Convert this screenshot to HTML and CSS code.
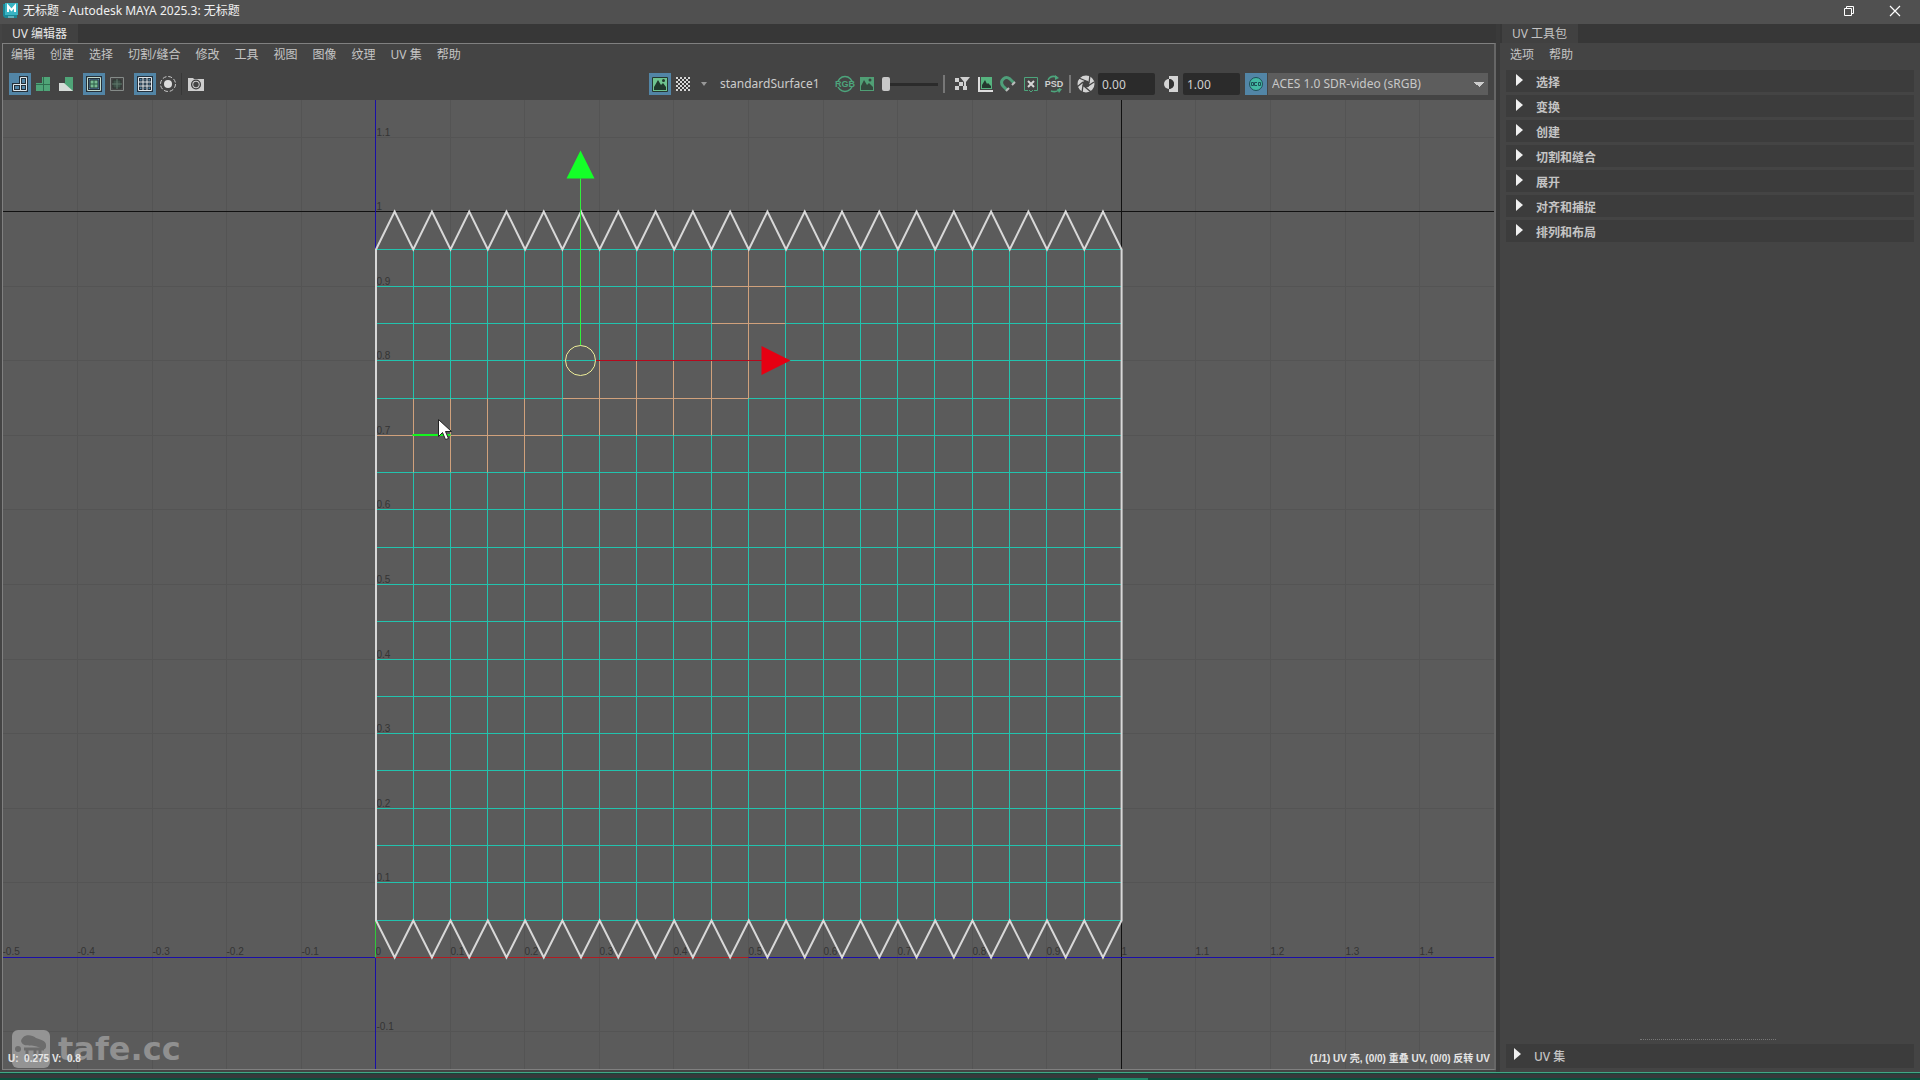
FILE: index.html
```
<!DOCTYPE html>
<html lang="zh-CN">
<head>
    <meta charset="UTF-8">
    <meta name="viewport" content="width=device-width, initial-scale=1.0">
    <title>无标题 - Autodesk MAYA 2025.3: 无标题</title>
    <link rel="stylesheet" href="styles.css">
</head>
<body>
    <header class="titlebar">
        <svg class="app-icon" viewBox="0 0 16 16">
            <path d="M1 1h14v14H3l-2-2z" fill="#1b8796"/>
            <path d="M3 0h13v12H3z" fill="#39b4c4"/>
            <path d="M6 9V3l3.5 4L13 3v6" fill="none" stroke="#fff" stroke-width="2"/>
            <path d="M6 14h6" stroke="#a5d8df"/>
        </svg>
        <h1>无标题 - Autodesk MAYA 2025.3: 无标题</h1>
        <div class="window-controls">
            <button type="button" aria-label="还原">
                <svg viewBox="0 0 10 10" width="10" height="10"><path d="M.5 2.5h7v7h-7zM2.5 2.5v-2h7v7h-2" fill="none" stroke="#fff"/></svg>
            </button>
            <button type="button" aria-label="关闭">
                <svg viewBox="0 0 10 10" width="10" height="10"><path d="M0 0l10 10M10 0L0 10" stroke="#fff" stroke-width="1.2"/></svg>
            </button>
        </div>
    </header>

    <main class="workspace">
        <section class="editor">
            <div class="tabs">
                <button type="button" class="tab active">UV 编辑器</button>
            </div>
            <div class="editor-frame">
                <nav class="menu">
                    <a href="#">编辑</a>
                    <a href="#">创建</a>
                    <a href="#">选择</a>
                    <a href="#">切割/缝合</a>
                    <a href="#">修改</a>
                    <a href="#">工具</a>
                    <a href="#">视图</a>
                    <a href="#">图像</a>
                    <a href="#">纹理</a>
                    <a href="#">UV 集</a>
                    <a href="#">帮助</a>
                </nav>

                <div class="toolbar">
                    <div class="tool-group">
                        <button type="button" class="tool on" aria-label="线框">
                            <svg viewBox="0 0 22 22"><g fill="none" stroke="#263038" stroke-width="3"><path d="M4.5 11.5h7v6h-7zM11.5 11.5h6v6h-6zM11.5 4.5h6v7h-6z"/></g><g fill="none" stroke="#dfe8ec"><path d="M4.5 11.5h7v6h-7zM11.5 11.5h6v6h-6zM11.5 4.5h6v7h-6z"/></g></svg>
                        </button>
                        <button type="button" class="tool" aria-label="着色">
                            <svg viewBox="0 0 22 22"><path d="M4 10h6V4h8v14H4z" fill="#4fa578"/><path d="M4 11.5h14M11.5 4v14" stroke="#2f6f50"/></svg>
                        </button>
                        <button type="button" class="tool" aria-label="扭曲">
                            <svg viewBox="0 0 22 22"><path d="M4 10h6V4h8v14H4z" fill="#4fa578"/><path d="M4 10h5l9 8H4z" fill="#d6dcd8"/></svg>
                        </button>
                    </div>
                    <div class="tool-group">
                        <button type="button" class="tool on" aria-label="边界">
                            <svg viewBox="0 0 22 22"><path d="M4.5 4.5h13v13h-13z" fill="none" stroke="#263038" stroke-width="3"/><path d="M4.5 4.5h13v13h-13z" fill="none" stroke="#c4dccf"/><path d="M7 7h8v8H7z" fill="#78bb92" stroke="#263038"/><path d="M11 7v8M7 11h8" stroke="#2c5c46"/></svg>
                        </button>
                        <button type="button" class="tool" aria-label="接缝">
                            <svg viewBox="0 0 22 22"><path d="M4.5 4.5h13v13h-13z" fill="none" stroke="#858b88"/><path d="M7 7h8v8H7z" fill="#3e5048" stroke="#2c3430"/><path d="M11 6v10M6 11h10" stroke="#607a6c"/></svg>
                        </button>
                    </div>
                    <div class="tool-group">
                        <button type="button" class="tool on" aria-label="栅格">
                            <svg viewBox="0 0 22 22"><g fill="none"><path d="M4.5 4.5h13v13h-13zM9 4v14M13 4v14M4 9h14M4 13h14" stroke="#24313d" stroke-width="3"/><path d="M4.5 4.5h13v13h-13zM9 4v14M13 4v14M4 9h14M4 13h14" stroke="#e1e9ed"/></g></svg>
                        </button>
                        <button type="button" class="tool" aria-label="隔离选择">
                            <svg viewBox="0 0 22 22"><circle cx="11" cy="11" r="4" fill="#ddd"/><circle cx="11" cy="11" r="7.5" fill="none" stroke="#c9c9c9" stroke-dasharray="4 1.9"/></svg>
                        </button>
                    </div>
                    <div class="tool-group divided">
                        <button type="button" class="tool" aria-label="UV 快照">
                            <svg viewBox="0 0 22 22"><path d="M3 5h5l1 1h10v12H3z" fill="#cecece"/><circle cx="11" cy="11.5" r="5" fill="#3c3c3c"/><circle cx="11" cy="11.5" r="3.7" fill="#cecece"/><circle cx="11" cy="11.5" r="2.7" fill="#444"/></svg>
                        </button>
                    </div>

                    <div class="tool-group display">
                        <button type="button" class="tool on" aria-label="显示图像">
                            <svg viewBox="0 0 22 22"><path d="M3.5 4.5h15v14h-15z" fill="#6fc48f" stroke="#25382f"/><path d="M5 17V14l4-7 3 5 2-2 3 4v3z" fill="#20382c"/><circle cx="14.5" cy="7.5" r="1.5" fill="#20382c"/></svg>
                        </button>
                        <button type="button" class="tool" aria-label="棋盘格">
                            <svg viewBox="0 0 22 22"><defs><pattern id="checker" width="4" height="4" patternUnits="userSpaceOnUse"><path d="M0 0h2v2H0zM2 2h2v2H2z" fill="#d4d4d4"/></pattern></defs><path d="M4 4h14v14H4z" fill="#3a3a3a"/><path d="M4 4h14v14H4z" fill="url(#checker)"/></svg>
                        </button>
                        <button type="button" class="tool" aria-label="棋盘格选项">
                            <svg viewBox="0 0 22 22"><path d="M6 9h6l-3 4z" fill="#999"/></svg>
                        </button>
                    </div>
                    <span class="material">standardSurface1</span>
                    <button type="button" class="tool" aria-label="RGB 通道">
                        <svg viewBox="0 0 22 22"><circle cx="11" cy="11" r="7.5" fill="none" stroke="#4da57c" stroke-width="1.5"/><path d="M2 8h18v6H2z" fill="#444"/><text x="11" y="14" class="glyph-text green">RGB</text></svg>
                    </button>
                    <button type="button" class="tool" aria-label="暗淡图像">
                        <svg viewBox="0 0 22 22"><path d="M4 4h14v14H4z" fill="#509f75"/><path d="M5 17V13l3-6 3 5 2-2 4 4v3z" fill="#34483d"/><circle cx="14" cy="7" r="1.5" fill="#34483d"/></svg>
                    </button>
                    <input type="range" class="dimmer" min="0" max="100" value="0" aria-label="暗淡">
                    <span class="splitter"></span>
                    <div class="tool-group">
                        <button type="button" class="tool" aria-label="过滤图像">
                            <svg viewBox="0 0 22 22"><path d="M4 5h4v4H4zM8 9h4v4H8zM4 13h4v4H4zM12 13h4v4h-4zM9 4h10l-4 5v4h-2V9z" fill="#d0d0d0"/></svg>
                        </button>
                        <button type="button" class="tool" aria-label="图像比例">
                            <svg viewBox="0 0 22 22"><path d="M5 4v14h14" fill="none" stroke="#ddd" stroke-width="2"/><path d="M7 4h11v12H7z" fill="#56b47f"/><path d="M8 15v-3l3-5 2 4 1-1 3 3v2z" fill="#24382e"/></svg>
                        </button>
                        <button type="button" class="tool" aria-label="像素捕捉">
                            <svg viewBox="0 0 22 22"><path d="M10 17L6 13C2 8 8 2 13 6l4 4" fill="none" stroke="#4f9f7a" stroke-width="3"/><path d="M9 18l3-3M15 12l3-3" stroke="#bbb" stroke-width="2"/></svg>
                        </button>
                        <button type="button" class="tool" aria-label="烘焙">
                            <svg viewBox="0 0 22 22"><path d="M8 17.5H4.5v-13h13v13H14M9 17l2 2 2-2" fill="none" stroke="#4da57c"/><path d="M8 8l6 6M14 8l-6 6" stroke="#d6d6d6" stroke-width="2"/></svg>
                        </button>
                        <button type="button" class="tool" aria-label="PSD 网络">
                            <svg viewBox="0 0 22 22"><path d="M5 7c2-4 6-4 9-3M17 15c-2 4-6 4-9 3" fill="none" stroke="#4da57c" stroke-width="1.5"/><path d="M12 2l4 3-4 2zM14 16h5l-3 4z" fill="#4da57c"/><text x="11" y="14" class="glyph-text">PSD</text></svg>
                        </button>
                    </div>
                    <span class="splitter"></span>
                    <label class="tool" for="exposure" aria-label="曝光">
                        <svg viewBox="0 0 22 22"><circle cx="11" cy="11" r="6" fill="none" stroke="#d4d4d4" stroke-width="5"/><path d="M11 8L4 5M14 10l1-8M13 13l6-4M10 14l6 5M8 12l-1 8M8 9l-6 5" stroke="#444" stroke-width="1.3"/></svg>
                    </label>
                    <input type="text" class="number" id="exposure" value="0.00">
                    <label class="tool" for="gamma" aria-label="伽马">
                        <svg viewBox="0 0 22 22"><path d="M9 3h9v16H9v-3a5 5 0 0 0 0-10z" fill="#d4d4d4"/><path d="M9 6a5 5 0 0 1 0 10z" fill="#333"/><path d="M9 6a5 5 0 0 0 0 10z" fill="#d4d4d4"/></svg>
                    </label>
                    <input type="text" class="number" id="gamma" value="1.00">
                    <button type="button" class="tool on" aria-label="颜色管理">
                        <svg viewBox="0 0 22 22"><circle cx="11" cy="11" r="6.5" fill="#43b9a3" stroke="#1f5058"/><path d="M6.5 9.5h2v3h-2zM12 9.5H9.5v3H12M13.5 9.5h2v3h-2z" fill="none" stroke="#1f5058"/></svg>
                    </button>
                    <select class="view-transform" aria-label="视图变换">
                        <option>ACES 1.0 SDR-video (sRGB)</option>
                    </select>
                </div>

                <div class="viewport">
                    <svg id="uv-canvas" class="uv-canvas" aria-label="UV 视图"></svg>
                    <div class="watermark">
                        <svg viewBox="0 0 40 40" width="40" height="40">
                            <rect x="1" y="1" width="38" height="38" rx="6" fill="#949494"/>
                            <path d="M10 12c2-7 10-7 15-3 6 2 11 3 10 9-1 4-4 2-8 0-6-3-15 1-17-6z" fill="#6c6c6c"/>
                            <circle cx="7" cy="20" r="3" fill="#6c6c6c"/>
                            <path d="M13 20h20M16 20v9M24 20v9M29 20v9" stroke="#6c6c6c" stroke-width="3"/>
                        </svg>
                        <span>tafe.cc</span>
                    </div>
                    <p class="status coords">U:&nbsp; 0.275 V:&nbsp; 0.8</p>
                    <p class="status shells">(1/1) UV 壳, (0/0) 重叠 UV, (0/0) 反转 UV</p>
                </div>
            </div>
        </section>

        <aside class="toolkit">
            <div class="tabs">
                <button type="button" class="tab">UV 工具包</button>
            </div>
            <nav class="menu">
                <a href="#">选项</a>
                <a href="#">帮助</a>
            </nav>
            <div class="sections">
                <button type="button" class="section">选择</button>
                <button type="button" class="section">变换</button>
                <button type="button" class="section">创建</button>
                <button type="button" class="section">切割和缝合</button>
                <button type="button" class="section">展开</button>
                <button type="button" class="section">对齐和捕捉</button>
                <button type="button" class="section">排列和布局</button>
            </div>
            <div class="grip"></div>
            <button type="button" class="section uv-sets">UV 集</button>
        </aside>
    </main>

    <footer class="strip"><span class="strip-handle"></span></footer>

    <script src="uv.js"></script>
</body>
</html>
```
FILE: styles.css
```
:root {
    --panel: #444444;
    --dark: #373737;
    --section: #3c3c3c;
    --canvas: #5b5b5b;
    --text: #c4c4c4;
    --active: #5285a6;
    --mesh: #22c3ae;
}

* {
    box-sizing: border-box;
    margin: 0;
    padding: 0;
}

body {
    display: flex;
    flex-direction: column;
    height: 100vh;
    overflow: hidden;
    background: var(--panel);
    color: var(--text);
    font-family: "Noto Sans", "Noto Sans CJK SC", sans-serif;
    font-size: 12px;
    line-height: 18px;
}

button,
input,
select {
    border: none;
    background: none;
    color: inherit;
    font: inherit;
}

a {
    color: inherit;
    text-decoration: none;
}

/* title bar */
.titlebar {
    display: flex;
    align-items: center;
    flex: none;
    height: 24px;
    padding: 0 20px 2px 2px;
    background: #505050;
    color: #f0f0f0;
}

.app-icon {
    width: 16px;
    height: 16px;
    margin-right: 5px;
}

.titlebar h1 {
    font-size: 12px;
    font-weight: 400;
}

.window-controls {
    display: flex;
    gap: 36px;
    margin-left: auto;
}

.window-controls button {
    display: flex;
    width: 10px;
}

.window-controls svg {
    overflow: visible;
}

/* main split */
.workspace {
    display: grid;
    grid-template-columns: minmax(0, 1fr) 420px;
    gap: 4px;
    flex: 1;
    min-height: 0;
    background: #3a3a3a;
}

.editor {
    display: flex;
    flex-direction: column;
    min-height: 0;
    padding: 0 0 2px 2px;
    background: var(--panel);
}

.tabs {
    display: flex;
    flex: none;
    height: 19px;
    background: var(--dark);
}

.tab {
    padding: 1px 11px 0 10px;
    background: #414141;
}

.tab.active {
    color: #e8e8e8;
}

.editor-frame {
    display: flex;
    flex-direction: column;
    flex: 1;
    min-height: 0;
    border: 1px solid #808080;
    border-right: 2px solid #666666;
}

.menu {
    display: flex;
    gap: 15px;
    flex: none;
    height: 22px;
    padding: 2px 8px;
}

/* toolbar */
.toolbar {
    display: flex;
    align-items: center;
    flex: none;
    height: 34px;
    padding: 2px 6px 0 6px;
}

.tool-group {
    display: flex;
    gap: 1px;
    margin-right: 6px;
}

.tool {
    flex: none;
    width: 22px;
    height: 22px;
}

.tool svg {
    display: block;
    width: 22px;
    height: 22px;
}

.tool.on {
    background: var(--active);
}

.divided {
    position: relative;
}

.divided::before {
    content: "";
    position: absolute;
    left: -4px;
    width: 1px;
    height: 22px;
    background: #383838;
}

.glyph-text {
    fill: #cfcfcf;
    font-family: "Liberation Sans", sans-serif;
    font-size: 9px;
    font-weight: 700;
    text-anchor: middle;
}

.glyph-text.green {
    fill: #4da57c;
}

.display {
    margin-left: auto;
    margin-right: 3px;
}

.material {
    width: 114px;
    color: #cccccc;
}

.dimmer {
    appearance: none;
    width: 56px;
    height: 16px;
    margin: 0 5px 0 4px;
    background: linear-gradient(#2b2b2b, #2b2b2b) center / 100% 3px no-repeat;
}

.dimmer::-webkit-slider-thumb {
    appearance: none;
    width: 8px;
    height: 14px;
    border-radius: 2px;
    background: #c8c8c8;
}

.splitter {
    flex: none;
    width: 2px;
    height: 18px;
    margin-right: 6px;
    background: #777777;
}

.toolbar .splitter + .tool-group {
    margin-right: 4px;
}

.toolbar .splitter + .tool {
    margin-left: -2px;
}

.number {
    flex: none;
    width: 57px;
    height: 22px;
    margin-right: 5px;
    margin-left: 1px;
    padding-left: 4px;
    border-radius: 2px;
    background: #2b2b2b;
    color: #d0d0d0;
}

.view-transform {
    appearance: none;
    flex: none;
    width: 220px;
    height: 22px;
    margin-left: 1px;
    padding-left: 4px;
    background-color: #5d5d5d;
    background-image: conic-gradient(from -45deg at 50% 100%, #cccccc 90deg, transparent 0);
    background-position: right 4px center;
    background-repeat: no-repeat;
    background-size: 10px 5px;
    color: #c8c8c8;
}

/* uv view */
.viewport {
    position: relative;
    flex: 1;
    min-height: 0;
    overflow: hidden;
    background: var(--canvas);
}

.uv-canvas {
    display: block;
    width: 100%;
    height: 100%;
}

.uv-canvas path { fill: none; }
.uv-canvas .grid { stroke: #545454; }
.uv-canvas .unit { stroke: #111111; }
.uv-canvas .axis { stroke: #1a0fa8; }
.uv-canvas .axis-u { stroke: #b01c22; }
.uv-canvas .axis-v { stroke: #2fc93a; }
.uv-canvas .mesh { stroke: var(--mesh); }
.uv-canvas .picked { stroke: #d0a17c; }
.uv-canvas .border { stroke: #d8d8d8; stroke-width: 2; }
.uv-canvas .hot { stroke: #14f51e; stroke-width: 2; }
.uv-canvas .move-v { stroke: #30f03c; }
.uv-canvas .move-u { stroke: #b5081c; }
.uv-canvas .pivot { stroke: #eeee99; }
.uv-canvas .head-v { fill: #14ff28; }
.uv-canvas .head-u { fill: #e60012; }
.uv-canvas .cursor { fill: #ffffff; stroke: #222222; }

.uv-canvas text {
    fill: #343434;
    font-family: "Liberation Sans", sans-serif;
    font-size: 10px;
}

.watermark {
    position: absolute;
    left: 8px;
    bottom: 0;
    display: flex;
    align-items: center;
    gap: 7px;
    color: #909090;
    font-family: "DejaVu Sans", sans-serif;
    font-size: 32px;
    font-weight: 700;
    line-height: 40px;
}

.status {
    position: absolute;
    bottom: 1px;
    color: #e6e6e6;
    font-family: "Liberation Sans", "Noto Sans CJK SC", sans-serif;
    font-size: 10px;
    font-weight: 700;
}

.coords {
    left: 5px;
}

.shells {
    right: 4px;
}

/* toolkit panel */
.toolkit {
    display: flex;
    flex-direction: column;
    min-height: 0;
    padding-bottom: 4px;
    background: var(--panel);
}

.toolkit .tab {
    margin-left: 2px;
}

.toolkit .menu {
    height: 26px;
    padding: 3px 10px;
}

.sections {
    display: flex;
    flex-direction: column;
    gap: 3px;
    margin: 1px 6px;
}

.section {
    display: flex;
    align-items: center;
    height: 22px;
    padding: 4px 10px 0 10px;
    background: var(--section);
    font-weight: 700;
}

.section::before {
    content: "";
    margin: -6px 13px 0 0;
    border: 6px solid transparent;
    border-right: 0;
    border-left: 7px solid #f0f0f0;
}

.grip {
    width: 136px;
    margin: auto 144px 4px 140px;
    border-bottom: 1px dotted #777777;
}

.uv-sets {
    height: 24px;
    margin: 0 6px;
    padding: 2px 8px 0;
    font-weight: 500;
}

.strip {
    position: relative;
    flex: none;
    height: 8px;
    border-top: 1px solid #42a886;
    border-bottom: 2px solid #0d4f3d;
    background: #37393b;
    box-shadow: inset 0 1px #16463a;
}

.strip-handle {
    position: absolute;
    left: 57.2%;
    bottom: -2px;
    width: 50px;
    height: 2px;
    background: #1d8a6a;
}
```
FILE: uv.js
```
const svg = document.getElementById('uv-canvas');
const NS = 'http://www.w3.org/2000/svg';

const LEFT = 372.75;   // u = 0
const TOP = 111.75;    // v = 1
const CELL = 37.28;    // 0.05 uv units
const N = 20;
const W = svg.clientWidth;
const H = svg.clientHeight;

// grid line positions, kept on whole pixels
const x = i => Math.floor(LEFT + i * CELL) + 0.5;
const y = j => Math.floor(TOP + j * CELL) + 0.5;

function path(cls, d) {
    const el = document.createElementNS(NS, 'path');
    el.setAttribute('class', cls);
    el.setAttribute('d', d);
    svg.appendChild(el);
}

function label(px, py, value) {
    const el = document.createElementNS(NS, 'text');
    el.setAttribute('x', px);
    el.setAttribute('y', py);
    el.textContent = value;
    svg.appendChild(el);
}

const hline = (j, a, b) => `M${a} ${y(j)}H${b}`;
const vline = (i, a, b) => `M${x(i)} ${a}V${b}`;

// background grid
let d = '';
for (let i = -10; x(i) < W; i += 2) d += vline(i, 0, H);
for (let j = -2; y(j) < H; j += 2) d += hline(j, 0, W);
path('grid', d);

for (let i = -10; x(i) < W - 30; i += 2) label(x(i), y(N) - 3, +(i / 20).toFixed(1));
for (let j = -2; y(j) < H; j += 2) {
    if (j !== N) label(x(0) + 1, y(j) - 2, +((N - j) / 20).toFixed(1));
}

path('unit', hline(0, 0, W) + vline(N, 0, H));
path('axis', hline(N, 0, W) + vline(0, 0, H));
path('axis-u', hline(N, x(0), x(10)));
path('axis-v', vline(0, y(10), y(N)));

// mesh edges
d = '';
for (let i = 1; i < N; i++) d += vline(i, y(1), y(N - 1));
for (let j = 1; j < N; j++) d += hline(j, x(0), x(N));
path('mesh', d);

// preselected edges: [column, from row, to row] and [row, from column, to column]
const cols = [[1, 5, 7], [2, 5, 7], [3, 5, 7], [4, 5, 7], [6, 4, 6], [7, 4, 6], [8, 4, 6], [9, 4, 6], [10, 1, 5]];
const rows = [[2, 9, 11], [3, 9, 11], [5, 5, 10], [6, 0, 5]];
d = cols.map(([i, a, b]) => vline(i, y(a), y(b))).join('') +
    rows.map(([j, a, b]) => hline(j, x(a), x(b))).join('');
path('picked', d);

// shell border
const bx = i => LEFT + 0.25 + i * CELL;
d = `M${bx(0)} ${y(1)}`;
for (let i = 0; i < N; i++) d += `L${bx(i + 0.5)} ${y(0)}L${bx(i + 1)} ${y(1)}`;
d += `V${y(N - 1)}`;
for (let i = N; i > 0; i--) d += `L${bx(i - 0.5)} ${y(N)}L${bx(i - 1)} ${y(N - 1)}`;
path('border', d + 'Z');

path('hot', `M${x(1) - 1} ${y(6) - 0.5}H${x(2)}`);

// move manipulator
const cx = x(5.5);
const cy = y(4);
path('move-v', `M${cx} ${cy - 15}V${cy - 182}`);
path('move-u', `M${cx + 15} ${cy}H${cx + 182}`);
path('head-v', `M${cx} ${cy - 210}l14 28h-28z`);
path('head-u', `M${cx + 210} ${cy}l-29 -14.5v29z`);
path('pivot', `M${cx - 15} ${cy}a15 15 0 1 0 30 0a15 15 0 1 0 -30 0`);

path('cursor', `M${x(2) - 12} ${y(6) - 16}v17l4 -4l3 7l3 -1l-3 -7h6z`);
```
